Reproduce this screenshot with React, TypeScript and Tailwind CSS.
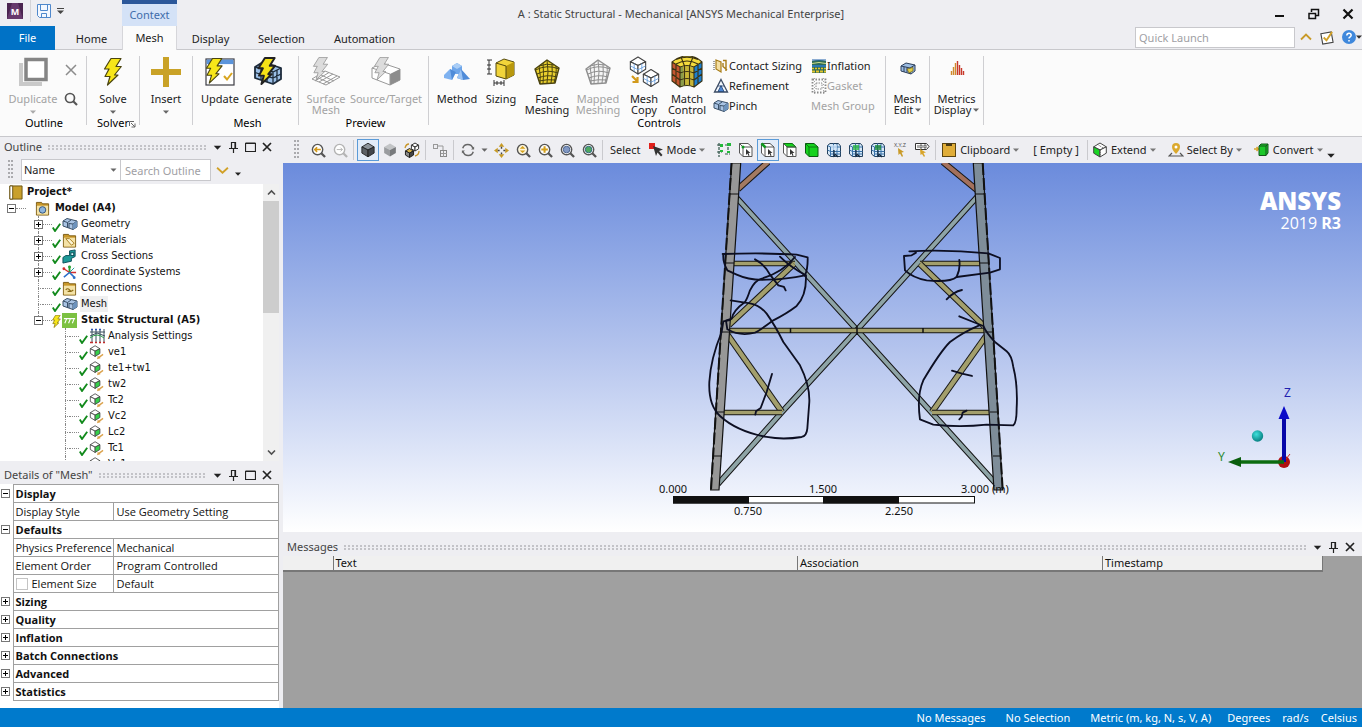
import React from "react";

type Kids = { children?: React.ReactNode };

/* ---------- drawing helpers ---------- */

function Ico({ s = 16, w, h, box, children }: Kids & { s?: number; w?: number; h?: number; box?: string }) {
  return (
    <svg width={w ?? s} height={h ?? s} viewBox={box ?? "0 0 16 16"} className="shrink-0" aria-hidden="true">
      {children}
    </svg>
  );
}

type CubeProps = { x: number; y: number; r: number; top?: string; left?: string; right?: string; line?: string; sw?: number; grid?: boolean };

function Cube({ x, y, r, top = "#fff", left = "#fff", right = "#fff", line = "#444", sw = 1, grid }: CubeProps) {
  const a = r * 0.9;
  const b = r * 0.45;
  return (
    <g transform={`translate(${x} ${y})`} stroke={line} strokeWidth={sw} strokeLinejoin="round">
      <path d={`M0 ${-r}L${a} ${-b}L0 0L${-a} ${-b}Z`} fill={top} />
      <path d={`M${-a} ${-b}L0 0V${r}L${-a} ${b}Z`} fill={left} />
      <path d={`M${a} ${-b}L0 0V${r}L${a} ${b}Z`} fill={right} />
      {grid && (
        <g strokeWidth={sw * 0.7} stroke="#5b97dc">
          <path d={`M${-a / 2} ${-b * 0.5}V${r * 0.72}M${a / 2} ${-b * 0.5}V${r * 0.72}`} fill="none" />
          <path d={`M${-a} ${b * 0.1}L0 ${r * 0.5}L${a} ${b * 0.1}`} fill="none" />
        </g>
      )}
    </g>
  );
}

function Bolt({ fill = "#f7e619", line = "#4a4410", sw = 1 }: { fill?: string; line?: string; sw?: number }) {
  return <path d="M7 .5H17L12 8.5H17.3L10.5 17H14L3.5 27L6 18.5H1L5 11H.5Z" fill={fill} stroke={line} strokeWidth={sw} strokeLinejoin="round" />;
}

function Down({ c = "#666", w = 6 }: { c?: string; w?: number }) {
  return (
    <svg width={w} height={w > 7 ? 5 : 4} viewBox="0 0 6 4" className="shrink-0" aria-hidden="true">
      <path d="M0 .5H6L3 3.7Z" fill={c} />
    </svg>
  );
}

/* ---------- ribbon ---------- */

function Group({ label, children, className = "", launcher }: Kids & { label?: string; className?: string; launcher?: boolean }) {
  return (
    <section className={`relative flex shrink-0 flex-col pt-1.5 ${className}`}>
      <div className="flex h-[60px]">{children}</div>
      <div className="flex h-3.5 items-center justify-center text-[11px] leading-[14px]">
        {label}
        {launcher && (
          <button aria-label="Solver options" className="absolute right-[3px] bottom-[3px]">
            <Ico s={7} box="0 0 7 7">
              <path d="M.5 5V.5H5M2 2L6 6M6 2.5V6H2.5" fill="none" stroke="#666" />
            </Ico>
          </button>
        )}
      </div>
    </section>
  );
}

function Sep() {
  return <div className="my-1.5 w-px shrink-0 bg-[#cfcfd2]" />;
}

function Big({ icon, lines, w, off, drop }: { icon: React.ReactNode; lines: string[]; w: string; off?: boolean; drop?: boolean }) {
  return (
    <button disabled={off} className={`flex shrink-0 flex-col items-center ${w} ${off ? "text-[#a3a3a3]" : "text-[#222]"}`}>
      <span className="flex h-8 items-center justify-center">{icon}</span>
      <span className="mt-[5px] flex flex-col items-center text-[11px] leading-[11px] whitespace-nowrap">
        {lines.map((l) => (
          <span key={l}>{l}</span>
        ))}
      </span>
      {drop && (
        <span className="mt-1.5">
          <Down c={off ? "#aaa" : "#666"} />
        </span>
      )}
    </button>
  );
}

function Small({ icon, label, off }: { icon?: React.ReactNode; label: string; off?: boolean }) {
  return (
    <button disabled={off} className={`flex h-[21px] items-center text-[11px] whitespace-nowrap ${off ? "text-[#a3a3a3]" : "text-[#222]"}`}>
      {icon}
      {label}
    </button>
  );
}

const DuplicateIcon = (
  <Ico s={30} box="0 0 30 30">
    <path d="M3 6V27H24" fill="none" stroke="#c9c9c9" strokeWidth="4" />
    <rect x="8" y="2.5" width="20" height="20" fill="#fff" stroke="#858585" strokeWidth="3.5" />
  </Ico>
);
const SolveIcon = (
  <Ico w={20} h={30} box="-1 -1 20 30">
    <Bolt sw={1.2} />
  </Ico>
);
const InsertIcon = (
  <Ico s={30} box="0 0 30 30">
    <path d="M12 0H18V12H30V18H18V30H12V18H0V12H12Z" fill="#c9a227" />
  </Ico>
);
const UpdateIcon = (
  <Ico s={30} box="0 0 30 30">
    <rect x="1" y="2" width="28" height="26" fill="#fff" stroke="#3c3c44" strokeWidth="1.2" />
    <rect x="1.6" y="2.6" width="26.8" height="4.5" fill="#5b95dc" />
    <path d="M19 19L22 22.5L27 16" fill="none" stroke="#d8a520" strokeWidth="2" />
    <g transform="translate(1 1) scale(.93)">
      <Bolt sw={1.2} />
    </g>
  </Ico>
);
const GenerateIcon = (
  <Ico s={30} box="0 0 30 30">
    <path d="M2 10L10 5L28 11V22L20 27L2 21Z" fill="#9cc0e8" stroke="#1d2c3c" strokeWidth="1.8" strokeLinejoin="round" />
    <path d="M2 10L20 15L28 11M20 15V27M8 12V23M14 14V25M2 15.5L20 21L28 17M24 13V24" fill="none" stroke="#1d2c3c" strokeWidth="1.3" />
    <g transform="translate(5 .5) scale(.98)">
      <Bolt fill="#f5e216" line="#222" sw={2} />
    </g>
  </Ico>
);
const SurfaceIcon = (
  <Ico s={30} box="0 0 30 30">
    <path d="M1 22L14 14L29 20L15 28Z" fill="#fff" stroke="#999" />
    <path d="M5 20L19 26M9 17.5L23 24M4 24L18 15.5M8 25L22 17M12 27L26 19" stroke="#999" fill="none" />
    <g transform="translate(2 0) scale(.85)">
      <Bolt fill="#dcdcdc" line="#999" />
    </g>
  </Ico>
);
const SourceIcon = (
  <Ico s={30} box="0 0 30 30">
    <path d="M1 11L11 6L29 12V23L19 28L1 21Z" fill="#fff" stroke="#999" />
    <path d="M19 17L29 12V23L19 28Z" fill="#8d8d8d" />
    <path d="M1 11L19 17V28" fill="none" stroke="#999" />
    <g transform="translate(3 0) scale(.85)">
      <Bolt fill="#dcdcdc" line="#999" />
    </g>
  </Ico>
);
const MethodIcon = (
  <Ico s={28} box="0 0 28 28">
    <path d="M9 8L14 5L19 8V16H9Z" fill="#6ea6ea" />
    <path d="M1 17L7 11L13 14L9 22L1 20Z" fill="#7fb2f0" />
    <path d="M7 11L13 14L9 22Z" fill="#4f8bd8" />
    <path d="M14 20L18 11L27 21L20 22Z" fill="#4f8bd8" />
    <path d="M18 11L14 20L20 22Z" fill="#9cc4f4" />
    <path d="M14 5L19 8L14 11L9 8Z" fill="#a9cdf6" />
  </Ico>
);
const SizingIcon = (
  <Ico s={30} box="0 0 30 30">
    <path d="M10 6L18 2L28 5V18L20 22L10 19Z" fill="#f1d43a" stroke="#544a10" strokeLinejoin="round" />
    <path d="M20 9L28 5V18L20 22Z" fill="#b8980e" />
    <path d="M10 6L20 9V22" fill="none" stroke="#544a10" />
    <path d="M3 3V17M1 3H6M1 8H5M1 12H5M1 17H6M8 23V29M18 23V29M8 26H18M11 24V28M15 24V28" stroke="#333" fill="none" />
  </Ico>
);

function Penta({ fill, line }: { fill: string; line: string }) {
  return (
    <Ico s={28} box="0 0 28 28">
      <path d="M14 2L26 10L22 25L7 26L2 11Z" fill={fill} stroke={line} strokeWidth="1.4" strokeLinejoin="round" />
      <path
        d="M10 5Q11 15 10 26M14 2Q16 14 14 25M19 6Q20 16 18 25M6 8Q8 18 7 26M23 8Q24 14 21 25M2.5 12Q14 6 26 11M4 16Q14 11 25 15M5 20Q14 16 24 19M6 23Q14 21 23 22M6 8Q14 5 21 7"
        fill="none"
        stroke={line}
      />
    </Ico>
  );
}

const CopyIcon = (
  <Ico s={32} box="0 0 32 32">
    <Cube x={10} y={9.5} r={8.5} line="#444" grid sw={1.1} />
    <Cube x={23} y={22} r={8.5} line="#444" grid sw={1.1} />
    <path d="M4 20L9 25M9.5 21V26H4.5" fill="none" stroke="#d29a1c" strokeWidth="2.2" />
  </Ico>
);
const MatchIcon = (
  <Ico s={32} box="0 0 32 32">
    <path d="M1 6Q8 0 16 0Q25 0 31 6L23 11Q16 8 9 11Z" fill="#f5dc3c" />
    <path d="M1 6L9 11V31L1 25Z" fill="#c4552f" />
    <path d="M9 11Q16 8 23 11V31Q16 28 9 31Z" fill="#8b9c4a" />
    <path d="M12 10Q17 8 23 11V31Q18 28 13 29Z" fill="#c8b637" />
    <path d="M23 11L31 6V25L23 31Z" fill="#1c7fd0" />
    <path
      d="M1 6Q8 0 16 0Q25 0 31 6V25L23 31Q16 28 9 31L1 25ZM1 6L9 11Q16 8 23 11L31 6M9 11V31M23 11V31M5 8.5V28M27 8.5V28M13.5 10V29M18.5 10V29M1 12L9 17Q16 14 23 17L31 12M1 18L9 24Q16 21 23 24L31 18M5 3.5Q16 -1 27 3.5M5 8Q16 2 27 8M10 1L13.5 10M22 1L18.5 10"
      fill="none"
      stroke="#3a3212"
      strokeWidth="1.1"
    />
  </Ico>
);
const ContactIcon = (
  <Ico>
    <path d="M3 2L8 4V14L3 11Z" fill="#f4dfa2" stroke="#a87d18" strokeWidth="1.2" />
    <path d="M10 2.5H13V13M10 5V8.5L14 12" fill="none" stroke="#a87d18" strokeWidth="1.4" />
    <path d="M1 3V12" stroke="#444" strokeDasharray="1 1" />
  </Ico>
);
const RefineIcon = (
  <Ico>
    <path d="M8 1.5L14.5 14H1.5Z" fill="#f2f7fd" stroke="#3c4c64" strokeWidth="1.3" />
    <path d="M8 7.5L11 13.5H5ZM5 8H11" fill="#4c86d4" stroke="#24436f" strokeWidth=".8" />
  </Ico>
);
const GeomIcon = (
  <Ico>
    <path d="M1 5L5 2.5L15 5V11L11 13.5L1 10Z" fill="#a9c4e4" stroke="#3a5068" strokeLinejoin="round" />
    <path d="M1 5L5.5 6.5V11.5M5.5 6.5L9 4M7 7.5L11 8L15 5M11 8V13.5M7 7V12" fill="none" stroke="#3a5068" />
    <path d="M11 8L15 5V11L11 13.5Z" fill="#6d93bd" />
  </Ico>
);
const InflationIcon = (
  <Ico>
    <path d="M1 3Q8 1 15 3V15H1Z" fill="#2f6b58" />
    <path d="M1 5.5Q8 3.5 15 5.5" stroke="#cfe08a" fill="none" />
    <path d="M1 8H15" stroke="#2a7bd0" strokeWidth="1.5" />
    <path d="M1 10.5H15" stroke="#e3c52e" strokeWidth="1.5" strokeDasharray="2 1" />
    <path d="M1 13.5H15" stroke="#e3c52e" strokeWidth="2" strokeDasharray="3 1" />
    <path d="M1 2H15" stroke="#1f5fa8" />
  </Ico>
);
const GasketIcon = (
  <Ico>
    <rect x="1.5" y="1.5" width="13" height="13" fill="none" stroke="#8a8a8a" strokeWidth="1.8" strokeDasharray="1.5 1.5" />
    <rect x="5" y="5" width="6" height="6" fill="none" stroke="#8a8a8a" strokeDasharray="1.5 1" />
    <path d="M3.5 0V16M12.5 0V16" stroke="#a8a8a8" strokeDasharray="1 2" />
  </Ico>
);
const MeshEditIcon = (
  <Ico>
    <path d="M1 6L6 3L15 5V11L11 14L1 11Z" fill="#9bbce2" stroke="#2d3f5a" />
    <path d="M1 6L10 8L15 5M10 8V14M4 7V12M7 7.5V12.5" fill="none" stroke="#2d3f5a" />
    <path d="M7 9L13 7.5V11L9 13Z" fill="#e2cf46" stroke="#6b5d14" strokeWidth=".7" />
  </Ico>
);
const MetricsIcon = (
  <Ico>
    <path d="M2.5 15V11M4.5 15V7M6.5 15V3" stroke="#d08a2c" strokeWidth="1.4" />
    <path d="M8.5 15V1M10.5 15V5M12.5 15V8M14.5 15V11" stroke="#c8382a" strokeWidth="1.4" />
  </Ico>
);

function Ribbon() {
  return (
    <div className="flex h-[87px] shrink-0 overflow-hidden border-b border-[#c8c8cc] bg-[#fbfbfb] pb-[5px]">
      <Group label="Outline" className="w-[86px] pl-0.5">
        <Big icon={DuplicateIcon} lines={["Duplicate"]} w="w-[62px]" off drop />
        <div className="flex w-3.5 flex-col items-center gap-4 pt-2">
          <button aria-label="Delete" disabled>
            <Ico s={12} box="0 0 12 12">
              <path d="M1 1L11 11M11 1L1 11" stroke="#8c8c8c" strokeWidth="1.5" />
            </Ico>
          </button>
          <button aria-label="Find">
            <Ico s={14} box="0 0 14 14">
              <circle cx="6" cy="6" r="4.5" fill="none" stroke="#555" strokeWidth="1.7" />
              <path d="M9 9L13 13" stroke="#555" strokeWidth="2.2" />
            </Ico>
          </button>
        </div>
      </Group>
      <Sep />
      <Group label="Solver" className="w-[52px]" launcher>
        <Big icon={SolveIcon} lines={["Solve"]} w="w-[52px]" drop />
      </Group>
      <Sep />
      <Group className="w-[52px]">
        <Big icon={InsertIcon} lines={["Insert"]} w="w-[52px]" drop />
      </Group>
      <Sep />
      <Group label="Mesh" className="w-[105px] pl-1">
        <Big icon={UpdateIcon} lines={["Update"]} w="w-[46px]" />
        <Big icon={GenerateIcon} lines={["Generate"]} w="w-[50px]" />
      </Group>
      <Sep />
      <Group label="Preview" className="w-[129px] pl-1">
        <Big icon={SurfaceIcon} lines={["Surface", "Mesh"]} w="w-[46px]" off />
        <Big icon={SourceIcon} lines={["Source/Target"]} w="w-[74px]" off />
      </Group>
      <Sep />
      <Group label="Controls" className="w-[456px] pl-1">
        <Big icon={MethodIcon} lines={["Method"]} w="w-12" />
        <Big icon={SizingIcon} lines={["Sizing"]} w="w-10" />
        <Big icon={<Penta fill="#e9cf2d" line="#4a4310" />} lines={["Face", "Meshing"]} w="w-[52px]" />
        <Big icon={<Penta fill="#f4f4f4" line="#8f8f8f" />} lines={["Mapped", "Meshing"]} w="w-[50px]" off />
        <Big icon={CopyIcon} lines={["Mesh", "Copy"]} w="w-[42px]" />
        <Big icon={MatchIcon} lines={["Match", "Control"]} w="w-11" />
        <div className="ml-1 flex w-[98px] flex-col">
          <Small icon={ContactIcon} label="Contact Sizing" />
          <Small icon={RefineIcon} label="Refinement" />
          <Small icon={GeomIcon} label="Pinch" />
        </div>
        <div className="flex flex-col">
          <Small icon={InflationIcon} label="Inflation" />
          <Small icon={GasketIcon} label="Gasket" off />
          <Small label="Mesh Group" off />
        </div>
      </Group>
      <Sep />
      <Group className="w-[43px]">
        <button className="flex w-full flex-col items-center text-[#222]">
          <span className="flex h-8 items-start pt-1">{MeshEditIcon}</span>
          <span className="mt-[5px] text-[11px] leading-[11px]">Mesh</span>
          <span className="flex items-center gap-0.5 text-[11px] leading-[11px]">
            Edit <Down />
          </span>
        </button>
      </Group>
      <Sep />
      <Group className="w-[53px]">
        <button className="flex w-full flex-col items-center text-[#222]">
          <span className="flex h-8 items-start pt-1">{MetricsIcon}</span>
          <span className="mt-[5px] text-[11px] leading-[11px]">Metrics</span>
          <span className="flex items-center gap-0.5 text-[11px] leading-[11px]">
            Display <Down />
          </span>
        </button>
      </Group>
      <Sep />
    </div>
  );
}

/* ---------- title and tabs ---------- */

function Header() {
  return (
    <header className="relative flex h-[50px] shrink-0 border-b border-[#c8c8cc] bg-[#eeeef2]">
      <div className="absolute inset-x-0 top-0 flex h-7 items-center justify-center text-[11px] text-[#444]">A : Static Structural - Mechanical [ANSYS Mechanical Enterprise]</div>
      <div className="relative flex w-[122px] flex-col">
        <div className="flex h-[26px] items-center pb-1 pl-[7px]">
          <Ico s={16}>
            <rect width="16" height="16" fill="#4a2450" />
            <path d="M0 16L5 0H11L16 16Z" fill="#66396c" />
            <text x="8" y="11.5" fontSize="9" fontWeight="700" fill="#fff" textAnchor="middle">
              M
            </text>
          </Ico>
          <span className="mx-[7px] h-[22px] w-px bg-[#d4d4d8]" />
          <button aria-label="Save" className="-ml-px">
            <Ico s={14} box="0 0 14 14">
              <path d="M.5 .5H13.5V13.5H2.5L.5 11.5Z" fill="#f4f8ff" stroke="#4f88cc" />
              <path d="M3.5 .5V6.5H10.5V.5M4.5 13.5V9.5H9.5V13.5" fill="none" stroke="#4f88cc" />
            </Ico>
          </button>
          <button aria-label="Customize toolbar" className="ml-1.5">
            <Ico s={7} box="0 0 7 7">
              <path d="M0 .5H7" stroke="#444" />
              <path d="M0 2.5H7L3.5 6Z" fill="#444" />
            </Ico>
          </button>
        </div>
        <nav className="flex h-6 items-center text-[11px] text-[#222]">
          <button className="h-6 w-[55px] bg-[#0072c6] text-white">File</button>
          <button className="h-6 flex-1 pt-0.5 pl-1.5 text-center">Home</button>
        </nav>
      </div>
      <div className="relative z-10 -mb-px flex w-[55px] flex-col text-center">
        <span className="h-[26px] border-t-4 border-[#2b579a] bg-[#d4e2f7] text-[11px] leading-[22px] text-[#3f6cab]">Context</span>
        <button className="h-[25px] border-x border-[#d6d6da] bg-[#fbfbfb] pt-px text-[11px] text-[#222]">Mesh</button>
      </div>
      <nav className="relative mt-[26px] flex h-6 items-center pt-0.5 text-[11px] text-[#222]">
        <button className="w-[67px]">Display</button>
        <button className="w-[75px]">Selection</button>
        <button className="w-[91px]">Automation</button>
      </nav>
      <div className="relative ml-auto flex flex-col items-end">
        <div className="flex h-[27px] items-center gap-[22px] pr-2">
          <button aria-label="Minimize">
            <Ico s={12} box="0 0 12 12">
              <path d="M1 8H10" stroke="#111" strokeWidth="2" />
            </Ico>
          </button>
          <button aria-label="Restore">
            <Ico s={12} box="0 0 12 12">
              <path d="M3.5 4V1.5H10.5V7.5H8M1 5.5H7.5V10.5H1ZM3 1.5H11M1 5.5H8" fill="none" stroke="#111" strokeWidth="1.5" />
            </Ico>
          </button>
          <button aria-label="Close">
            <Ico s={12} box="0 0 12 12">
              <path d="M1.5 1.5L10.5 10.5M10.5 1.5L1.5 10.5" stroke="#111" strokeWidth="2.2" />
            </Ico>
          </button>
        </div>
        <div className="flex h-5 items-center">
          <input aria-label="Quick Launch" placeholder="Quick Launch" className="h-[21px] w-40 border border-[#c8c8cc] bg-white px-[3px] text-[11px] placeholder:text-[#a0a0a4]" />
          <button aria-label="Collapse ribbon" className="ml-1">
            <Ico s={14} box="0 0 14 14">
              <path d="M2 9.5L7 4.5L12 9.5" fill="none" stroke="#c99a28" strokeWidth="1.8" />
            </Ico>
          </button>
          <button aria-label="Options" className="ml-1.5">
            <Ico s={15}>
              <path d="M2 4L13 2L15 13L4 15Z" fill="#fff" stroke="#444" strokeWidth="1.2" />
              <path d="M5 8L8 11L14 2" fill="none" stroke="#d1a128" strokeWidth="2" />
            </Ico>
          </button>
          <button aria-label="Help" className="ml-2 flex items-center">
            <Ico s={14} box="0 0 14 14">
              <circle cx="7" cy="7" r="7" fill="#3f88dc" />
              <path d="M4.8 5.5Q5 3.3 7 3.3T9.2 5.3Q9.2 6.5 7.1 7.8V8.6M7 10V11.5" fill="none" stroke="#fff" strokeWidth="1.5" />
            </Ico>
            <Down c="#333" />
          </button>
        </div>
      </div>
    </header>
  );
}

/* ---------- docked panel title ---------- */

function PanelTitle({ title, max }: { title: string; max?: boolean }) {
  return (
    <div className="flex h-[18px] shrink-0 items-center bg-[#eeeef2] pr-[7px] pl-1 text-[11px] leading-[18px] text-[#444]">
      <h2 className="whitespace-nowrap">{title}</h2>
      <div className="mx-1.5 h-[5px] flex-1 bg-[radial-gradient(circle_at_1px_1px,#b4b4b8_0.6px,transparent_1px)] bg-[size:4px_3px]" />
      <div className="flex items-center gap-1.5">
        <button aria-label="Menu">
          <Down c="#222" w={9} />
        </button>
        <button aria-label="Pin">
          <Ico s={11} box="0 0 11 11">
            <path d="M3.5 6V.5H7.5V6M1 6.5H10M5.5 7V11M7 .5V6" fill="none" stroke="#222" strokeWidth="1.2" />
          </Ico>
        </button>
        {max && (
          <button aria-label="Maximize">
            <Ico s={11} box="0 0 11 11">
              <path d="M.5 1.5H10.5V9.5H.5ZM.5 1H10.5" fill="none" stroke="#222" strokeWidth="1.2" />
            </Ico>
          </button>
        )}
        <button aria-label="Close panel">
          <Ico s={10} box="0 0 10 10">
            <path d="M1 1L9 9M9 1L1 9" stroke="#222" strokeWidth="1.7" />
          </Ico>
        </button>
      </div>
    </div>
  );
}

/* ---------- outline tree ---------- */

function Toggle({ open }: { open?: boolean }) {
  return (
    <button aria-label={open ? "Collapse" : "Expand"} className="relative shrink-0">
      <Ico s={9} box="0 0 9 9">
        <rect x=".5" y=".5" width="8" height="8" fill="#fff" stroke="#777" />
        <path d={open ? "M2 4.5H7" : "M2 4.5H7M4.5 2V7"} stroke="#000" />
      </Ico>
    </button>
  );
}

const Folder = (
  <>
    <path d="M1.5 4V1.5H7L8 3H14.5V15H1.5Z" fill="#c9982a" stroke="#7a5a12" />
    <rect x="2" y="5" width="12" height="9.5" fill="#f4e2a6" />
  </>
);
const Icons: Record<string, React.ReactNode> = {
  project: (
    <Ico s={15}>
      <path d="M2 1H15V15H2Z" fill="#c9a02c" stroke="#6a5212" />
      <path d="M2 1H5V15H2Z" fill="#fff" stroke="#6a5212" />
    </Ico>
  ),
  model: (
    <Ico s={15}>
      {Folder}
      <circle cx="8" cy="9.5" r="3.5" fill="#8db4dc" stroke="#2f5078" />
    </Ico>
  ),
  geometry: <>{GeomIcon}</>,
  materials: (
    <Ico s={15}>
      {Folder}
      <path d="M4 6L8 6L13 11L10 13Z" fill="#fbf4d4" stroke="#a87d20" />
    </Ico>
  ),
  sections: (
    <Ico s={15}>
      <path d="M1 9L4 7H8V2L14 1V8L10 10V13L1 15Z" fill="#1d9a98" stroke="#0c4e58" />
      <rect x="9.5" y="4" width="3" height="3" fill="#e8ffff" stroke="#0c4e58" />
    </Ico>
  ),
  coords: (
    <Ico s={15}>
      <path d="M8 8V1" stroke="#28a22c" strokeWidth="2" />
      <path d="M8 8L2 4M8 8H15" stroke="#d03030" strokeWidth="1.5" />
      <path d="M8 8L2 13M8 8L13 13" stroke="#2a6fc8" strokeWidth="1.7" />
      <path d="M8 8L13 3" stroke="#1d9a98" />
      <circle cx="13" cy="13.5" r="1.5" fill="#2a6fc8" />
      <circle cx="2" cy="4" r="1.5" fill="#d03030" />
      <circle cx="8" cy="2" r="1.5" fill="#28a22c" />
    </Ico>
  ),
  connections: (
    <Ico s={15}>
      {Folder}
      <path d="M4 9.5Q6 7 8 9.5T12 9.5M6 11H10" fill="none" stroke="#8a6a14" strokeWidth="1.3" />
    </Ico>
  ),
  structural: (
    <Ico s={15}>
      <rect width="16" height="16" fill="#7cc142" />
      <path d="M2 6H14M3 11L5 6M7 11L9 6M11 11L13 6" stroke="#fff" strokeWidth="1.2" />
    </Ico>
  ),
  settings: (
    <Ico s={16}>
      <path d="M3 1V14M7 1V14M11 1V14M15 1V14M1 4H16M1 8L8 5L16 8" stroke="#3a4f5c" fill="none" />
      <path d="M1 10Q8 4 15 10" stroke="#2e9f4a" fill="none" />
      <path d="M1 14.5H4M6 14.5H8M10 14.5H12M14 14.5H16" stroke="#c22c2c" strokeWidth="1.5" />
      <path d="M2 1.5H4M6 1.5H8M10 1.5H12" stroke="#2c52b2" strokeWidth="1.5" />
    </Ico>
  ),
  load: (
    <Ico s={15}>
      <Cube x={6.5} y={6.5} r={5.7} right="#35d04a" left="#fff" top="#fff" line="#444" sw={0.9} />
      <path d="M15 10L9.5 14M12 13.5L9.5 14.2L10 12" stroke="#dba24c" strokeWidth="1.4" fill="none" />
    </Ico>
  ),
};

const Check = (
  <Ico s={9} box="0 0 9 9">
    <path d="M.8 4.5L3 8L8.2 .8" fill="none" stroke="#128a1c" strokeWidth="1.9" />
  </Ico>
);
const SmallBolt = (
  <Ico w={9} h={13} box="0 0 18 28">
    <Bolt sw={1.6} line="#8a7a10" />
  </Ico>
);

type Node = { label: string; icon: string; toggle?: "open" | "closed"; bold?: boolean; bolt?: boolean; current?: boolean; last?: boolean };

const parts: Node[] = [
  { label: "Geometry", icon: "geometry", toggle: "closed" },
  { label: "Materials", icon: "materials", toggle: "closed" },
  { label: "Cross Sections", icon: "sections", toggle: "closed" },
  { label: "Coordinate Systems", icon: "coords", toggle: "closed" },
  { label: "Connections", icon: "connections" },
  { label: "Mesh", icon: "geometry", current: true },
  { label: "Static Structural (A5)", icon: "structural", toggle: "open", bold: true, bolt: true, last: true },
];
const loads = ["ve1", "te1+tw1", "tw2", "Tc2", "Vc2", "Lc2", "Tc1", "Vc1"];

function Row({ n, deep }: { n: Node; deep?: boolean }) {
  return (
    <li className={`flex h-4 items-center ${deep ? "pl-[61px]" : "pl-[34px]"}`}>
      <span className="relative flex h-4 w-[9px] items-center justify-center">
        <span className={`absolute top-0 left-1 border-l border-dotted border-[#888] ${n.last ? "h-2" : "h-4"}`} />
        {n.toggle ? <Toggle open={n.toggle === "open"} /> : <span className="ml-1 w-[5px] border-t border-dotted border-[#888]" />}
      </span>
      <span className="w-[9px] border-t border-dotted border-[#888]" />
      <span className="flex w-[9px] self-end">{n.bolt ? SmallBolt : Check}</span>
      <span className="ml-px flex w-4">{Icons[n.icon]}</span>
      <span className={`ml-0.5 px-px whitespace-nowrap ${n.bold ? "font-bold" : ""} ${n.current ? "bg-[#f0f0f0]" : ""}`}>{n.label}</span>
    </li>
  );
}

function Grip() {
  return <span className="h-5 w-[6px] shrink-0 bg-[radial-gradient(circle_at_1px_1px,#a8a8ac_0.7px,transparent_1px)] bg-[size:3px_4px]" />;
}

function Outline() {
  return (
    <section className="flex min-h-0 flex-1 flex-col">
      <PanelTitle title="Outline" max />
      <div className="flex h-7 shrink-0 items-center bg-[#eeeef2] pl-2">
        <Grip />
        <div className="relative ml-[7px] flex w-[100px]">
          <select aria-label="Filter by" defaultValue="Name" className="h-[22px] w-full appearance-none border border-[#c8c8cc] bg-white px-[2px] text-[11px] text-[#222]">
            <option>Name</option>
          </select>
          <span className="pointer-events-none absolute top-[9px] right-1 flex">
            <Down w={7} />
          </span>
        </div>
        <input aria-label="Search Outline" placeholder="Search Outline" className="h-[22px] w-[90px] border border-l-0 border-[#c8c8cc] bg-white px-1 text-[11px] placeholder:text-[#a0a0a4]" />
        <button aria-label="Expand search" className="ml-[5px]">
          <Ico s={13} box="0 0 12 12">
            <path d="M1 3.5L6 8L11 3.5" fill="none" stroke="#d1a128" strokeWidth="1.7" />
          </Ico>
        </button>
        <button aria-label="More" className="mt-2 ml-1.5">
          <Down c="#222" />
        </button>
      </div>
      <div className="flex min-h-0 flex-1">
        <ul className="min-w-0 flex-1 overflow-hidden bg-white font-['DejaVu_Sans_Condensed','Open_Sans',sans-serif] text-[11px] leading-4 text-[#111]">
          <li className="flex h-4 items-center gap-1 pl-2 font-bold">
            {Icons.project} Project*
          </li>
          <li className="flex h-4 items-center pl-[7px] font-bold">
            <Toggle open />
            <span className="mr-[9px] w-2.5 border-t border-dotted border-[#888]" />
            {Icons.model}
            <span className="ml-[5px]">Model (A4)</span>
          </li>
          {parts.map((n) => (
            <Row key={n.label} n={n} />
          ))}
          <Row n={{ label: "Analysis Settings", icon: "settings" }} deep />
          {loads.map((l) => (
            <Row key={l} n={{ label: l, icon: "load" }} deep />
          ))}
        </ul>
        <div className="flex w-4 shrink-0 flex-col items-center bg-[#f0f0f0]">
          <button aria-label="Scroll up" className="flex h-[17px] items-center">
            <Ico s={9} box="0 0 9 9">
              <path d="M1 6.5L4.5 3L8 6.5" fill="none" stroke="#505050" strokeWidth="1.6" />
            </Ico>
          </button>
          <div className="h-28 w-full bg-[#cdcdcd]" />
          <button aria-label="Scroll down" className="mt-auto flex h-[17px] items-center">
            <Ico s={9} box="0 0 9 9">
              <path d="M1 2.5L4.5 6L8 2.5" fill="none" stroke="#505050" strokeWidth="1.6" />
            </Ico>
          </button>
        </div>
      </div>
    </section>
  );
}

/* ---------- details ---------- */

type Detail = { head: string; open?: boolean; rows?: [string, string][] };
const details: Detail[] = [
  { head: "Display", open: true, rows: [["Display Style", "Use Geometry Setting"]] },
  {
    head: "Defaults",
    open: true,
    rows: [
      ["Physics Preference", "Mechanical"],
      ["Element Order", "Program Controlled"],
      ["Element Size", "Default"],
    ],
  },
  { head: "Sizing" },
  { head: "Quality" },
  { head: "Inflation" },
  { head: "Batch Connections" },
  { head: "Advanced" },
  { head: "Statistics" },
];

function Details() {
  return (
    <section className="mt-[5px] shrink-0 bg-white pb-[7px]">
      <PanelTitle title={'Details of "Mesh"'} max />
      <table className="w-full table-fixed border-collapse font-['Open_Sans',sans-serif] text-[11px] leading-4 text-[#111]">
        <colgroup>
          <col className="w-[13px]" />
          <col className="w-[100px]" />
          <col />
        </colgroup>
        <tbody>
          {details.map((d) => (
            <React.Fragment key={d.head}>
              <tr className="h-[18px]">
                <td className="p-0 pl-px align-middle">
                  <div className="flex">
                    <Toggle open={d.open} />
                  </div>
                </td>
                <th colSpan={2} className="border border-[#a0a0a0] p-0 pl-0.5 text-left font-bold">
                  {d.head}
                </th>
              </tr>
              {d.rows?.map(([k, v]) => (
                <tr key={k} className="h-[18px]">
                  <td className="p-0" />
                  <td className="border border-[#a0a0a0] p-0 pl-0.5 whitespace-nowrap">
                    {k === "Element Size" ? (
                      <label className="flex items-center gap-1">
                        <input type="checkbox" className="size-3 appearance-none border border-[#c4c4c4] bg-white" />
                        {k}
                      </label>
                    ) : (
                      k
                    )}
                  </td>
                  <td className="border border-[#a0a0a0] p-0 pl-[3px] whitespace-nowrap">{v}</td>
                </tr>
              ))}
            </React.Fragment>
          ))}
        </tbody>
      </table>
    </section>
  );
}

/* ---------- graphics toolbar ---------- */

function Lens({ c = "#555", fill = "#fff", children }: Kids & { c?: string; fill?: string }) {
  return (
    <Ico s={15}>
      <circle cx="7" cy="7" r="5.5" fill={fill} stroke={c} strokeWidth="1.5" />
      <path d="M11 11L15 15" stroke={c} strokeWidth="2.4" />
      {children}
    </Ico>
  );
}

function Tool({ label, on, children }: Kids & { label: string; on?: boolean }) {
  return (
    <button aria-label={label} className={`flex h-[22px] w-[22px] shrink-0 items-center justify-center ${on ? "border border-[#5b9bd8] bg-[#e3ecf8]" : ""}`}>
      {children}
    </button>
  );
}

function TSep() {
  return <span className="mr-[3px] ml-0.5 h-5 w-px shrink-0 bg-[#cacace]" />;
}

function PickCube({ mode }: { mode: "vertex" | "edge" | "face" | "body" }) {
  const body = mode === "body";
  const g = "#16d21e";
  return (
    <Ico>
      <path d="M1.5 1.5H10L14 5V14.5H5L1.5 11Z" fill={body ? g : "#fff"} stroke={body ? "#0a5a12" : "#555"} strokeLinejoin="round" />
      {mode === "face" && <path d="M1.5 1.5H10L14 5H5Z" fill={g} stroke="#0a7a12" />}
      <path d="M1.5 1.5L5 5H14M5 5V14.5" fill="none" stroke={body ? "#0a7a12" : "#555"} />
      {mode === "vertex" && <circle cx="5" cy="5" r="1.5" fill="#0e9a1e" />}
      {mode === "edge" && <path d="M1.5 1.5L5.5 5.5" stroke="#0e9a1e" strokeWidth="2.5" />}
      {!body && <path d="M8 7V13L9.5 11.5L10.5 14L11.5 13.5L10.5 11H12.5Z" fill="#333" />}
    </Ico>
  );
}

function NodePick({ fill }: { fill: string }) {
  return (
    <Ico>
      <path d="M1.5 3.5L4 1.5H12.5L14.5 4V14.5H4.5L1.5 12Z" fill="#d6e8f8" stroke="#24405c" />
      <path d="M1.5 3.5L4.5 5H14.5M4.5 5V14.5M7.5 1.5V14.5M11 2V14.5M1.5 8L4.5 9.5H14.5M4 12H14.5" fill="none" stroke="#3a72a8" />
      <rect x="5" y="3" width="6" height="5" fill={fill} opacity=".75" />
      <path d="M8 8V14L9.5 12.5L12 15" fill="none" stroke="#15283c" strokeWidth="1.2" />
    </Ico>
  );
}

function Menu({ icon, label }: { icon: React.ReactNode; label: string }) {
  return (
    <button className="flex shrink-0 items-center whitespace-nowrap">
      {icon}
      <span className="mr-[3px] ml-[3px]">{label}</span>
      <Down c="#777" w={6} />
    </button>
  );
}

function Toolbar() {
  return (
    <div className="flex h-[26px] shrink-0 items-center overflow-hidden bg-[#eeeef2] pl-[11px] text-[11px] text-[#222]">
      <Grip />
      <span className="w-[7px] shrink-0" />
      <Tool label="Previous view">
        <Lens>
          <path d="M10.5 7H4M6.5 4.5L4 7L6.5 9.5" fill="none" stroke="#d49a1c" strokeWidth="1.7" />
        </Lens>
      </Tool>
      <Tool label="Next view">
        <Lens c="#b4b4b4">
          <path d="M4 7H10M8 5L10 7L8 9" fill="none" stroke="#b4b4b4" />
        </Lens>
      </Tool>
      <TSep />
      <Tool label="Shaded exterior and edges" on>
        <Ico>
          <Cube x={8} y={8} r={6.8} top="#8d9399" left="#5c6166" right="#43474c" line="#222" sw={0.9} />
        </Ico>
      </Tool>
      <Tool label="Shaded exterior">
        <Ico>
          <Cube x={8} y={8} r={6.5} top="#c2c4c6" left="#9a9c9f" right="#77797c" line="none" />
        </Ico>
      </Tool>
      <Tool label="Thick shells and beams">
        <Ico>
          <Cube x={11} y={5} r={4} top="#fff" left="#fff" right="#fff" line="#333" />
          <Cube x={5.5} y={11} r={4.5} top="#d8b34a" left="#8a8a8a" right="#444" line="#222" />
          <path d="M1 6Q2 2 5 2M15 9Q15 13 11 14" fill="none" stroke="#c8962a" strokeWidth="1.3" />
        </Ico>
      </Tool>
      <TSep />
      <Tool label="Show mesh">
        <Ico>
          <rect x="1.5" y="2.5" width="4" height="4" fill="none" stroke="#999" />
          <rect x="8.5" y="8.5" width="6" height="6" fill="none" stroke="#888" />
          <path d="M6 4H11V8M11.5 9V15M9 11.5H15" stroke="#999" fill="none" />
        </Ico>
      </Tool>
      <TSep />
      <Tool label="Rotate">
        <Ico s={14}>
          <path d="M2 6A6 6 0 0 1 13.5 6M14 10A6 6 0 0 1 2.5 10" fill="none" stroke="#666" strokeWidth="1.7" />
          <path d="M15 4V7.5H11.5ZM1 12V8.5H4.5Z" fill="#666" />
        </Ico>
      </Tool>
      <button aria-label="Rotate options" className="mx-[2px] flex">
        <Down w={7} />
      </button>
      <Tool label="Pan">
        <Ico s={15}>
          <path d="M8 0L11 4H5ZM8 16L5 12H11ZM0 8L4 5V11ZM16 8L12 11V5Z" fill="#c89b24" />
          <path d="M8 4V6M8 10V12M4 8H6M10 8H12" stroke="#444" strokeWidth="1.5" />
        </Ico>
      </Tool>
      <Tool label="Zoom">
        <Lens fill="#fdf6dc">
          <path d="M4 6L7 3.3L10 6ZM4 8L7 10.7L10 8Z" fill="#d4a01c" />
        </Lens>
      </Tool>
      <Tool label="Box zoom">
        <Lens>
          <path d="M7 3.5V10.5M3.5 7H10.5" stroke="#d4a01c" strokeWidth="2.2" />
        </Lens>
      </Tool>
      <Tool label="Zoom to fit">
        <Lens>
          <circle cx="7" cy="7" r="3.5" fill="#8198c4" stroke="#48608c" />
        </Lens>
      </Tool>
      <Tool label="Zoom to selection">
        <Lens>
          <circle cx="7" cy="7" r="3.5" fill="#4fa860" stroke="#2d6680" />
        </Lens>
      </Tool>
      <TSep />
      <span className="mr-[7px] ml-1">Select</span>
      <Menu
        icon={
          <Ico>
            <rect x="1" y="1" width="6" height="6" fill="#e0201c" />
            <path d="M5 4L15 7.5L11 9L14.5 13L13 14.5L9.5 10.5L8 14Z" fill="#333" />
          </Ico>
        }
        label="Mode"
      />
      <span className="w-2 shrink-0" />
      <Tool label="Smart select">
        <Ico>
          <path d="M1 3H5M3 1V15M1 10H6M9 3H15M12 1V8M9 12H14" stroke="#33564a" strokeWidth="1.2" strokeDasharray="3 1" fill="none" />
          <path d="M4 2H7V5H4ZM11 1H15V4H11ZM4 8H7V10H4ZM11 9H14V11H11Z" fill="#22b83a" />
        </Ico>
      </Tool>
      <Tool label="Vertex">
        <PickCube mode="vertex" />
      </Tool>
      <Tool label="Edge" on>
        <PickCube mode="edge" />
      </Tool>
      <Tool label="Face">
        <PickCube mode="face" />
      </Tool>
      <Tool label="Body">
        <PickCube mode="body" />
      </Tool>
      <Tool label="Node">
        <NodePick fill="#cfe4f8" />
      </Tool>
      <Tool label="Element face">
        <NodePick fill="#28b83c" />
      </Tool>
      <Tool label="Element">
        <NodePick fill="#158a2c" />
      </Tool>
      <Tool label="Hit point coordinate">
        <Ico>
          <text x="8" y="5" fontSize="5.5" fill="#555" textAnchor="middle">
            X,Y,Z
          </text>
          <path d="M6 6L12 10L9.5 10.5L11 14L10 15L8 11.5L6.5 13Z" fill="#c99a28" />
        </Ico>
      </Tool>
      <Tool label="Label">
        <Ico>
          <path d="M1.5 1.5H12.5L15 4.5L12.5 7.5H1.5Z" fill="#fff" stroke="#333" />
          <path d="M4 3V6M6 3H8V6H6ZM10 3H12V6H10Z" stroke="#333" fill="none" strokeWidth=".8" />
          <path d="M6 7L12 10.5L9.5 11L11 14L10 15L8 12L6.5 13Z" fill="#d8a52c" />
        </Ico>
      </Tool>
      <TSep />
      <span className="w-0.5 shrink-0" />
      <Menu
        icon={
          <Ico>
            <rect x="1.5" y="1.5" width="13" height="13" fill="#e0ad38" stroke="#5a4410" />
            <rect x="5" y="1" width="6" height="3" fill="#4a3a14" />
          </Ico>
        }
        label="Clipboard"
      />
      <span className="mx-3.5 whitespace-nowrap">[ Empty ]</span>
      <span className="mr-1 -ml-1.5 h-5 w-px shrink-0 bg-[#cacace]" />
      <Menu
        icon={
          <Ico>
            <Cube x={8} y={8} r={7} left="#18d424" right="#fff" top="#fff" line="#444" sw={1} />
            <path d="M8 8V14M5 2L11 6" stroke="#555" strokeDasharray="1 1" />
          </Ico>
        }
        label="Extend"
      />
      <span className="w-3 shrink-0" />
      <Menu
        icon={
          <Ico>
            <path d="M8 1A4 4 0 0 1 12 5Q12 8 8 12Q4 8 4 5A4 4 0 0 1 8 1Z" fill="#dba92e" />
            <circle cx="8" cy="5" r="1.5" fill="#fff" />
            <path d="M4 11L1 14H15L12 11" fill="none" stroke="#555" strokeWidth="1.2" />
          </Ico>
        }
        label="Select By"
      />
      <span className="w-3 shrink-0" />
      <Menu
        icon={
          <Ico>
            <path d="M0 7H4M2.5 5L4.5 7L2.5 9" stroke="#d8a52c" strokeWidth="1.5" fill="none" />
            <path d="M5 4L7 2H14V11L12 13.5H5Z" fill="#1cc82a" stroke="#14541a" />
            <path d="M5 4H12V13.5M12 4L14 2" fill="none" stroke="#14541a" />
          </Ico>
        }
        label="Convert"
      />
      <button aria-label="More tools" className="mt-2.5 ml-1">
        <Down c="#222" w={8} />
      </button>
    </div>
  );
}

/* ---------- 3D view ---------- */

function Beam({ d, c, w = 5 }: { d: string; c: string; w?: number }) {
  return (
    <>
      <path d={d} stroke="#161616" strokeWidth={w + 1.4} fill="none" />
      <path d={d} stroke={c} strokeWidth={w - 0.6} fill="none" />
    </>
  );
}

function Tower() {
  const yellow = "#a39f6c";
  const blue = "#8ea4a6";
  return (
    <svg viewBox="283 163 1079 369" className="absolute inset-0 h-full w-full" fontSize="11" fill="#111" role="img" aria-label="Tower model">
      <Beam d="M768 162L738 189" c="#a37a62" />
      <Beam d="M943 162L977 190" c="#a3705c" />
      <Beam d="M735 196L857 330L998 486" c={blue} w={4.5} />
      <Beam d="M718 484L782 412L857 330L977 197" c={blue} w={4.5} />
      <Beam d="M732 263.5H795" c={yellow} w={4} />
      <Beam d="M794 264L729 325" c={yellow} />
      <Beam d="M727 330.5H988" c={yellow} w={4} />
      <Beam d="M727 334L782 412" c={yellow} />
      <Beam d="M722 412.5H782" c={yellow} w={4} />
      <Beam d="M920 263.5H981" c={yellow} w={4} />
      <Beam d="M920 264L984 326" c={yellow} />
      <Beam d="M986 336L932 412" c={yellow} />
      <Beam d="M932 412.5H991" c={yellow} w={4} />
      <path d="M790.5 328V333M923 328V333M857 326V335" stroke="#111" strokeWidth="1.5" />
      <path d="M731.7 163H740.7L719 490H710.7Z" fill="#979797" stroke="#111" strokeWidth="1.2" />
      <path d="M731.5 163L711 490" stroke="#111" strokeWidth="2" strokeDasharray="12 3" />
      <path d="M973.3 163H982.7L1002.7 490H994Z" fill="#7e8d99" stroke="#111" strokeWidth="1.2" />
      <path d="M982.7 163L1002.7 490" stroke="#111" strokeWidth="2" strokeDasharray="12 3" />
      <path d="M729 194H739M726 263H734M722 332H730M716 412H724M713 456H722M975 194H985M980 263H989M985 332H993M990 412H998M993 456H1001" stroke="#111" />
      <g transform="translate(640 162) scale(.3333)" fill="none" stroke="#0d0f22" strokeWidth="5.5" strokeLinecap="round" strokeLinejoin="round">
        <path d="M248 276Q380 272 470 278L503 286Q504 320 495 340Q440 352 380 353Q330 356 290 338L262 325Q248 300 250 276" />
        <path d="M420 284Q450 315 498 340Q500 400 470 432Q440 455 400 475Q360 505 345 512Q300 524 262 502L258 476L275 470Q280 445 315 420Q322 410 330 385Q345 355 365 350Q430 330 465 285" />
        <path d="M345 292Q375 308 390 338L415 370L432 375L437 385" />
        <path d="M272 415Q300 420 330 424Q360 430 380 455Q405 490 430 540L480 610Q510 670 508 720L502 800Q500 822 485 825Q430 834 380 825Q290 808 240 762Q205 730 208 660Q212 590 245 510L250 478L270 474" />
        <path d="M396 636L380 690L362 738L348 748L346 758" />
        <g transform="translate(600 0)">
          <path d="M208 268Q320 262 445 274L480 288V322L450 332L350 345Q330 362 260 355Q220 348 195 325L192 282L215 280L228 272" />
          <path d="M358 294Q362 320 350 345M320 412Q340 390 366 384M358 463L400 480L430 492Q440 515 465 540L500 568Q515 580 520 615Q534 670 530 740Q530 782 520 790L440 788Q360 797 280 788L240 772Q230 700 250 655Q300 570 330 540Q370 510 418 490" />
          <path d="M336 626L366 635L396 642M380 746L368 752L365 765L358 772" />
        </g>
      </g>
      <rect x="673.5" y="496.5" width="301" height="6.5" fill="#fff" stroke="#111" />
      <path d="M673 496H749V503.5H673ZM823 496H899V503.5H823Z" />
      <text x="673" y="493" textAnchor="middle">0.000</text>
      <text x="823" y="493" textAnchor="middle">1.500</text>
      <text x="961" y="493">3.000 (m)</text>
      <text x="748" y="515" textAnchor="middle">0.750</text>
      <text x="899" y="515" textAnchor="middle">2.250</text>
    </svg>
  );
}

function Triad() {
  return (
    <svg width="90" height="90" viewBox="0 0 90 90" className="absolute right-[62px] bottom-[58px]" fontSize="12" role="img" aria-label="Axis triad">
      <defs>
        <radialGradient id="ball" cx=".4" cy=".35" r=".7">
          <stop offset="0" stopColor="#3fe0dc" />
          <stop offset="1" stopColor="#047a7c" />
        </radialGradient>
      </defs>
      <circle cx="74" cy="78" r="6" fill="#b01010" />
      <path d="M76 75L80 70" stroke="#d02020" />
      <path d="M74 78V34" stroke="#0808a8" strokeWidth="4" />
      <path d="M74 22L79.5 35H68.5Z" fill="#0a0ac8" />
      <path d="M74 78H30" stroke="#0c6c10" strokeWidth="3.5" />
      <path d="M18 78L31 73V83Z" fill="#0a5e0e" />
      <circle cx="47.5" cy="52" r="5.7" fill="url(#ball)" />
      <text x="74" y="13" fill="#2020b0">Z</text>
      <text x="8" y="77" fill="#2a8a30">Y</text>
    </svg>
  );
}

function View() {
  return (
    <main className="relative min-h-0 flex-1 overflow-hidden bg-linear-to-b from-[#6b8bdc] via-[#b3c3ed] to-white">
      <Tower />
      <Triad />
      <div className="absolute top-[22px] right-[21px] flex flex-col items-end font-['Open_Sans',sans-serif] text-white">
        <div className="text-[24px] leading-8 font-extrabold">ANSYS</div>
        <div className="-mt-1 text-[16px] leading-5">
          2019 <b>R3</b>
        </div>
      </div>
    </main>
  );
}

/* ---------- messages ---------- */

function Messages() {
  const th = "border-r border-b-2 border-r-[#777] border-b-[#777] bg-[#f0f0f0] p-0 pl-0.5 text-left font-normal";
  return (
    <section className="mt-1.5 flex h-[170px] shrink-0 flex-col bg-[#a0a0a0]">
      <PanelTitle title="Messages" />
      <table className="mr-[39px] table-fixed border-collapse text-[11px] leading-[14px] text-[#111]">
        <colgroup>
          <col className="w-[50px]" />
          <col />
          <col className="w-[305px]" />
          <col className="w-[220px]" />
        </colgroup>
        <thead>
          <tr>
            <th className={th} aria-label="Status" />
            <th className={th}>Text</th>
            <th className={th}>Association</th>
            <th className={th}>Timestamp</th>
          </tr>
        </thead>
      </table>
    </section>
  );
}

export default function App() {
  return (
    <div className="flex h-screen flex-col overflow-hidden bg-[#eeeef2] font-['Noto_Sans','Open_Sans',sans-serif]">
      <Header />
      <Ribbon />
      <div className="flex min-h-0 flex-1">
        <aside className="flex w-[279px] shrink-0 flex-col pt-px">
          <Outline />
          <Details />
        </aside>
        <div className="ml-1 flex min-w-0 flex-1 flex-col">
          <Toolbar />
          <View />
          <Messages />
        </div>
      </div>
      <footer className="flex h-[19px] shrink-0 items-center justify-end bg-[#007acc] pt-0.5 pr-[5px] text-[11px] whitespace-nowrap text-white">
        <span className="mr-5">No Messages</span>
        <span className="mr-5">No Selection</span>
        <span className="mr-4">Metric (m, kg, N, s, V, A)</span>
        <span className="mr-3">Degrees</span>
        <span className="mr-3">rad/s</span>
        <span>Celsius</span>
      </footer>
    </div>
  );
}
